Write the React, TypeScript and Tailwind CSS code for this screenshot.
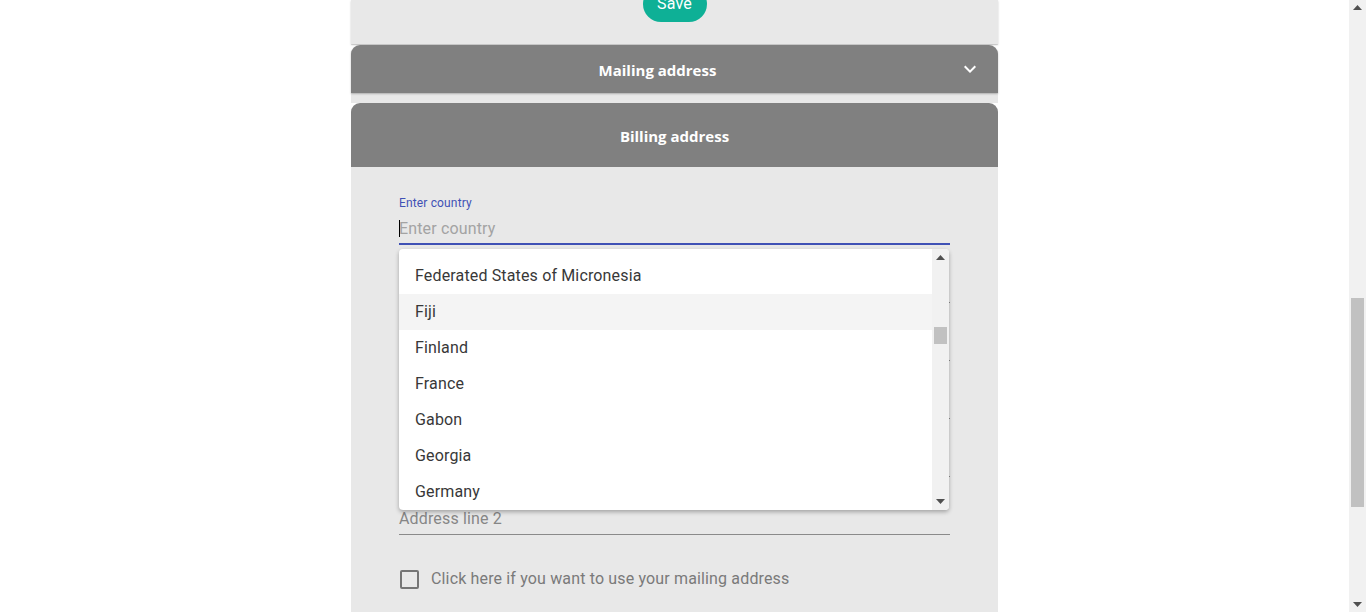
import React from "react";

const items = [
  "Federated States of Micronesia",
  "Fiji",
  "Finland",
  "France",
  "Gabon",
  "Georgia",
  "Germany",
];

function Field({ placeholder }: { placeholder?: string }) {
  return (
    <div className="h-[58px] flex flex-col justify-end">
      <div className="h-[30px] flex items-center text-[16px] tracking-[0.15px] text-[#868686]">{placeholder}</div>
      <div className="h-px bg-[#8a8a8a] w-[551px]" />
    </div>
  );
}

export default function App() {
  return (
    <div className="w-[1366px] h-[612px] overflow-hidden bg-white flex" style={{ fontFamily: "Roboto, 'Liberation Sans', sans-serif" }}>
      <div className="flex-1 flex justify-center">
        <div className="w-[647px] flex flex-col relative">
          {/* top card */}
          <div className="h-[44px] bg-[#e8e8e8] flex justify-center shadow-[0_1px_2px_rgba(0,0,0,0.2)] relative z-10">
            <div className="mt-[-14px] w-[64px] h-[36px] rounded-full bg-[#0eb096] text-white text-[16px] tracking-[0.15px] flex items-center justify-center">
              Save
            </div>
          </div>
          <div className="h-px bg-[#e8e8e8]" />
          {/* Mailing header */}
          <div className="h-[48px] bg-[#808080] rounded-t-[9px] flex items-center pr-4 shadow-[0_1px_2px_rgba(0,0,0,0.25)] relative z-10" style={{ fontFamily: "'Open Sans', sans-serif" }}>
            <div className="flex-1 text-center text-white font-bold text-[15px] pl-[6px] pt-[2px]">Mailing address</div>
            <svg width="24" height="24" viewBox="0 0 24 24" fill="white">
              <path d="M7.41 8.59 12 13.17l4.59-4.58L18 10l-6 6-6-6 1.41-1.41z" />
            </svg>
          </div>
          <div className="h-[10px] bg-[#e8e8e8]" />
          {/* Billing header */}
          <div className="h-[64px] bg-[#808080] rounded-t-[9px] flex items-center justify-center pt-[2px]" style={{ fontFamily: "'Open Sans', sans-serif" }}>
            <div className="text-white font-bold text-[15px]">Billing address</div>
          </div>
          {/* body */}
          <div className="flex-1 bg-[#e8e8e8] px-[48px] pt-[29px] relative">
            <div className="text-[12px] leading-[14px] tracking-[0.15px] text-[#3f51b5]">Enter country</div>
            <div className="h-[31px] flex items-center relative text-[16px] tracking-[0.15px] text-[#a3a3a3] mt-[2px] pt-[2px]">
              <span className="absolute left-0 top-[8px] w-px h-[17px] bg-black" />
              Enter country
            </div>
            <div className="h-[2px] bg-[#3f51b5] w-[551px]" />
            <Field />
            <Field />
            <Field />
            <Field />
            <Field placeholder="Address line 2" />
            <div className="mt-[32px] flex items-center gap-[12px]">
              <div className="w-[19px] h-[19px] border-2 border-[#757575] rounded-[2px] ml-[1px]" />
              <div className="text-[16px] tracking-[0.15px] text-[#7a7a7a]">Click here if you want to use your mailing address</div>
            </div>

            {/* dropdown */}
            <div className="absolute left-[48px] top-[82px] w-[550px] h-[261px] bg-white rounded-[4px] shadow-[0_2px_4px_rgba(0,0,0,0.3)] overflow-hidden flex">
              <div className="flex-1 pt-[9px]">
                {items.map((it) => (
                  <div
                    key={it}
                    className={
                      "h-[36px] flex items-center pl-[16px] text-[16px] tracking-[0.15px] text-[#383838] " +
                      (it === "Fiji" ? "bg-[#f4f4f4]" : "")
                    }
                  >
                    {it}
                  </div>
                ))}
              </div>
              <div className="w-[17px] bg-[#f1f1f1] flex flex-col items-center relative">
                <svg className="absolute top-[6px]" width="9" height="5" viewBox="0 0 9 5"><path d="M0 5 L4.5 0 L9 5 Z" fill="#505050" /></svg>
                <div className="absolute top-[78px] left-[2px] w-[13px] h-[17px] bg-[#c1c1c1]" />
                <svg className="absolute bottom-[6px]" width="9" height="5" viewBox="0 0 9 5"><path d="M0 0 L9 0 L4.5 5 Z" fill="#505050" /></svg>
              </div>
            </div>
          </div>
        </div>
      </div>
      {/* page scrollbar */}
      <div className="w-[17px] h-full bg-[#f1f1f1] relative">
        <svg className="absolute top-[5px] left-[4px]" width="9" height="5" viewBox="0 0 9 5"><path d="M0 5 L4.5 0 L9 5 Z" fill="#505050" /></svg>
        <div className="absolute top-[298px] left-[2px] w-[13px] h-[209px] bg-[#c1c1c1]" />
        <svg className="absolute bottom-[5px] left-[4px]" width="9" height="5" viewBox="0 0 9 5"><path d="M0 0 L9 0 L4.5 5 Z" fill="#505050" /></svg>
      </div>
    </div>
  );
}
